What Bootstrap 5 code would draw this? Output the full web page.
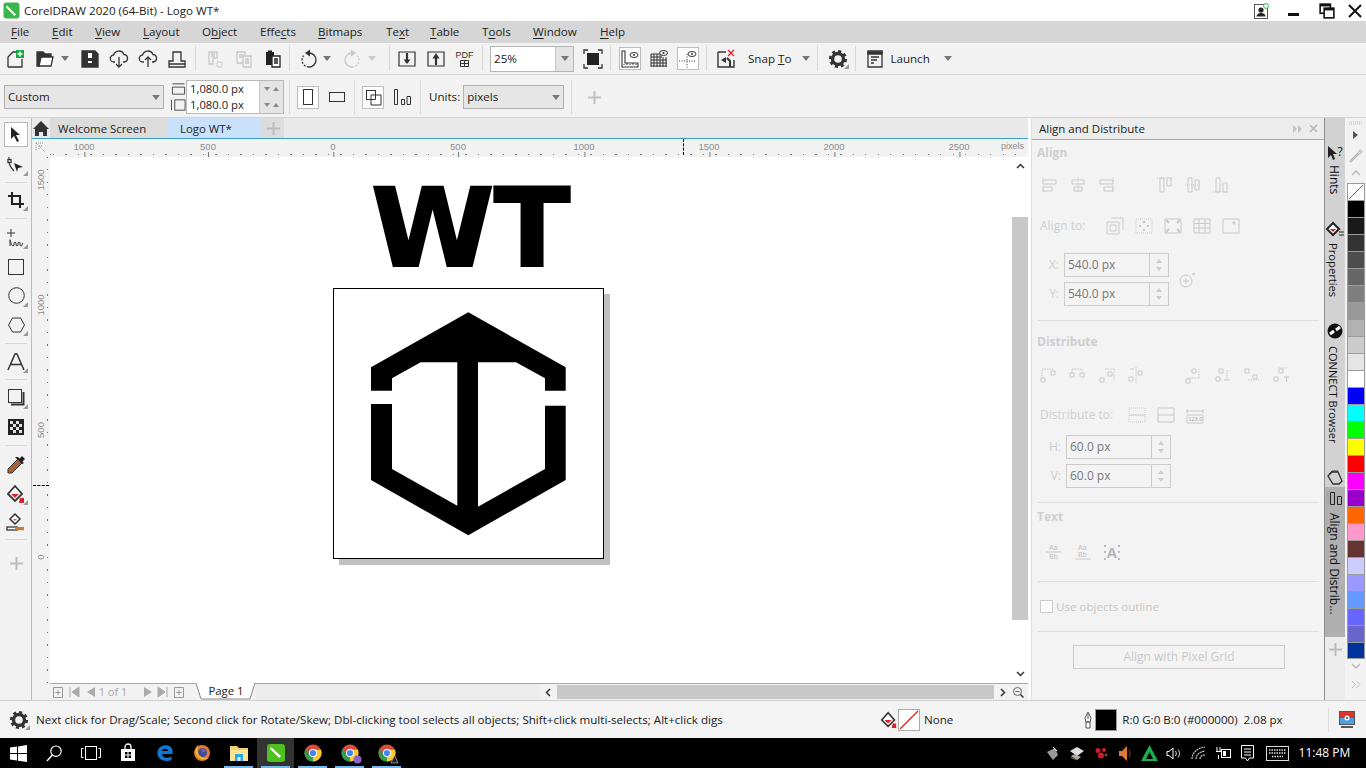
<!doctype html>
<html lang="en">
<head>
<meta charset="utf-8">
<title>CorelDRAW 2020 (64-Bit) - Logo WT*</title>
<link href="https://cdn.jsdelivr.net/npm/bootstrap@5.3.0/dist/css/bootstrap.min.css" rel="stylesheet">
<style>
html,body{margin:0;height:768px;width:1366px;overflow:hidden}
body{font-family:"Open Sans","Liberation Sans",sans-serif;font-size:11.6px;color:#222;background:#f2f2f2;line-height:1.2}
svg{display:block;overflow:visible}
.ic{width:20px;height:20px;fill:none;stroke:#333;stroke-width:1.3}
.ic.lt{stroke:#c8c8c8}
.titlebar{height:21px;background:#fff}
.menubar{height:22px;background:#d6d6d6;display:grid;grid-template-columns:11px 41px 43px 48px 59px 58px 58px 68px 44px 52px 51px 67px 60px}
.menubar u{text-underline-offset:2px}
.bar1{height:32px;background:#f2f2f2;border-bottom:1px solid #d4d4d4}
.bar2{height:43px;background:#f2f2f2;border-bottom:1px solid #d4d4d4;padding-top:2px}
.slot{width:29px;height:26px;flex:none;display:flex;align-items:center;justify-content:center}
.slot22{width:22px;height:23px;flex:none;display:flex;align-items:center;justify-content:center}
.slot.on,.slot22.on{background:#fff;border:1px solid #bdbdbd}
.car{width:8px;height:10px;flex:none;display:flex;align-items:center;justify-content:center}
.car::after{content:"";border:4px solid transparent;border-top:5px solid #777;border-bottom:0}
.car.off::after{border-top-color:#ccc}
.vs{width:1px;height:25px;background:#d6d6d6;flex:none}
.vs2{width:1px;height:34px;background:#d9d9d9;flex:none}
.m1{margin-left:1px}.m2{margin-left:2px}.m3{margin-left:3px}.m4{margin-left:4px}.m5{margin-left:5px}.m6{margin-left:6px}.m7{margin-left:7px}.m8{margin-left:8px}.m9{margin-left:9px}.m10{margin-left:10px}.m11{margin-left:11px}.m13{margin-left:13px}.m14{margin-left:14px}.m16{margin-left:16px}.m19{margin-left:19px}
.combo{height:24px;background:#e6e6e6;border:1px solid #b0b0b0;display:flex;align-items:center;padding-left:3px;flex:none;font-size:11.6px}
.combo .car{margin-left:auto;margin-right:3px}
.zoombox{width:84px;height:26px;border:1px solid #b5b5b5;background:#fff;display:flex;align-items:center;padding-left:3px;flex:none;font-size:11.6px}
.zoombox b{font-weight:400;margin-left:auto;width:18px;height:24px;background:#e4e4e4;border-left:1px solid #c4c4c4;display:flex;align-items:center;justify-content:center}
.spinbox{width:98px;flex:none;border:1px solid #b8b8b8;font-size:11.3px}
.spinrow{height:16px;display:flex}
.spinrow span{flex:1;background:#fff;padding-left:3px;line-height:15px}
.spinrow i{width:24px;background:#e4e4e4;border-left:1px solid #c4c4c4;display:flex;align-items:center;justify-content:space-evenly}
.tri-d,.tri-u{border:3px solid transparent;width:0;height:0}
.tri-d{border-top:4px solid #888;border-bottom:0}
.tri-u{border-bottom:4px solid #888;border-top:0}
.mainrow{height:582px}
.toolbox{width:32px;background:#f2f2f2;border-right:1px solid #bcbcbc;flex:none;padding-left:1px}
.tool{height:29px;display:flex;align-items:center;justify-content:center;position:relative}
.tool.on{width:24px;height:25px;margin:4px 0 3px 3px;background:#fff;border:1px solid #b8b8b8}
.tool.more::after,.slot.more::after{content:"";position:absolute;right:3px;bottom:3px;border-style:solid;border-width:0 0 5px 5px;border-color:transparent transparent #999 transparent}
.slot.more{position:relative}
.tsep{height:1px;background:#d6d6d6;margin:0 4px}
.sp6{padding:3px 0 2px}.sp7{padding:3px 0 3px}.sp8{padding:4px 0 3px}.sp9{padding:4px 0 4px}.sp12{padding:2px 0 9px}
.work{width:996px;flex:none}
.tabstrip{height:21px;background:#e9e9e9;border-bottom:1px solid #3a9ecb}
.dtab{height:20px;display:flex;align-items:center;font-size:11.4px;flex:none;padding-top:1px}
.dhome{width:18px;margin-left:0;justify-content:center}
.dwelcome{width:118px;background:#dcdcdc;padding-left:8px}
.dlogo{width:94px;background:#c9e1fb;padding-left:12px}
.dplus{width:22px;background:#dcdcdc;justify-content:center}
.hruler{height:18px;background:#f2f2f2;position:relative;overflow:hidden}
.hruler::after{content:"";position:absolute;left:18px;right:0;bottom:2px;height:1px;background:repeating-linear-gradient(90deg,#777 0 1px,transparent 1px 12.5px);background-position:3px 0}
.rl{position:absolute;font-size:9.5px;color:#8c8c8c;transform:translateX(-50%);top:2px;font-family:"Liberation Sans",sans-serif}
.rl::after{content:"";position:absolute;left:50%;top:11px;height:5px;width:1px;background:#777}
.rlx::after{display:none}
.vruler{width:18px;background:#f2f2f2;position:relative;flex:none}
.vruler::after{content:"";position:absolute;top:0;bottom:0;right:2px;width:1px;background:repeating-linear-gradient(180deg,#777 0 1px,transparent 1px 12.5px)}
.rv{position:absolute;left:9px;font-size:9.5px;color:#8c8c8c;writing-mode:vertical-rl;transform:translate(-50%,-50%) rotate(180deg);font-family:"Liberation Sans",sans-serif}
.vmark{position:absolute;left:1px;top:328px;width:16px;border-top:1px dashed #000}
.hmark{position:absolute;left:651px;top:0;height:16px;border-left:1px dashed #000}
.canvasrow{height:526px}
.canvasarea{position:relative;background:#fff;width:962px;flex:none;overflow:hidden}
.pageshadow{position:absolute;left:289px;top:137px;width:271px;height:271px;background:#c0c0c0}
.pagebox{position:absolute;left:283px;top:131px;width:271px;height:271px;background:#fff;border:1px solid #000}
.pagebox svg{position:absolute;left:-1px;top:-1px}
.wordmark{position:absolute;left:320px;top:18px;width:200px;text-align:center;font-family:"DejaVu Sans",sans-serif;font-weight:700;font-size:108px;line-height:1;color:#000;-webkit-text-stroke:1.8px #000;letter-spacing:-1px;white-space:nowrap;transform:scaleX(1.04)}
.vscroll{width:16px;background:#fff;flex:none;display:flex;flex-direction:column;align-items:center}
.vscroll .th{width:16px;height:403px;background:#c8c8c8;margin:42px 0 45px}
.vscroll .ar{height:18px;display:flex;align-items:center}
.pagenav{height:17px;background:#f2f2f2;border-top:1px solid #a8a8a8;margin-left:18px;color:#a8a8a8;position:relative}
.pn{display:flex;align-items:center;justify-content:center;flex:none;height:16px;white-space:nowrap}
.pagetab{position:relative;width:60px;height:16px;flex:none;margin-left:9px;color:#222;font-size:11.4px;text-align:center}
.pagetab svg{position:absolute;left:0;top:-1px}
.pagetab span{position:relative}
.navfill{width:284px;flex:none;background:#ececec;height:16px}
.hthumb{width:437px;height:14px;background:#c8c8c8;flex:none}
.gapstrip{width:4px;flex:none;background:#fff;border-right:1px solid #ddd}
.docker{width:292px;flex:none;background:#f3f3f3;color:#c6c6c6}
.dktitle{height:22px;background:#ececec;border-bottom:1px solid #a9a9a9;color:#222;font-size:11.5px;padding:0 6px 0 7px}
.dkhead{height:20px;margin-left:5px;font-weight:700;color:#cfcfcf;font-size:12px;display:flex;align-items:center}
.dkrow{height:20px;display:flex;align-items:center}
.dk{width:18px;height:18px;fill:none;stroke:#c9c9c9;stroke-width:1}
.dk.dkA{stroke:#aaa}
.dk text{font-family:"Liberation Sans",sans-serif;font-size:7px;fill:#c0c0c0;stroke:none}
.dk text.big{font-size:15px;font-weight:700;fill:#b5b5b5}
.dk text.num{font-size:5.5px;fill:#aaa}
.ds{width:29px;display:flex;justify-content:center;flex:none}
.ds28{width:28px;display:flex;justify-content:center;flex:none}
.dklabel{margin-left:8px;font-size:12px;color:#cfcfcf;width:60px;flex:none}
.dkfield{height:24px;display:flex;align-items:center;font-size:12px}
.dkfield label{width:32px;text-align:right;padding-right:5px;color:#cfcfcf;flex:none}
.dkfield.two label{width:34px}
.dkinput{width:105px;height:24px;border:1px solid #ccc;display:flex;align-items:center;padding-left:3px;color:#777;flex:none}
.dkinput i{margin-left:auto;width:19px;height:22px;border-left:1px solid #ccc;display:flex;flex-direction:column;align-items:center;justify-content:space-evenly}
.dkinput .tri-d{border-top-color:#ccc}.dkinput .tri-u{border-bottom-color:#ccc}
.dkline{height:1px;background:#dedede;margin:0 5px 0 6px}
.t3{margin-top:3px}.t4{margin-top:4px}.t5{margin-top:5px}.t10{margin-top:10px}.t11{margin-top:11px}.t12{margin-top:12px}.t13{margin-top:13px}.t14{margin-top:14px}.t15{margin-top:15px}.t17{margin-top:17px}.t19{margin-top:19px}.t20{margin-top:20px}.t21{margin-top:21px}
.chk{width:13px;height:13px;border:1px solid #ccc;background:#fbfbfb;margin:0 3px 0 8px;flex:none}
.dkbtn{width:212px;height:24px;margin-left:41px;border:1px solid #ccc;display:flex;align-items:center;justify-content:center;font-size:12px;color:#c9c9c9}
.vtabs{width:21px;flex:none;background:#d2d2d2;border-left:1px solid #8c8c8c;color:#111;position:relative}
.vt{writing-mode:vertical-rl;font-size:12px;white-space:nowrap;margin-left:2px}
.vi{height:18px;display:flex;align-items:center;justify-content:center}
.vihint{font-size:12px;line-height:1}
.vtsel{height:150px;background:#b0b0b0;padding-top:2px}
.vtrest{height:63px;background:#ececec;display:flex;justify-content:center;padding-top:6px}
.palette{width:21px;flex:none;background:#f2f2f2;display:flex;flex-direction:column;align-items:center}
.sw{width:18px;height:17px;flex:none;border:1px solid #9b9b9b;border-bottom-width:0;position:relative}
.sw:last-of-type{border-bottom-width:1px}
.c0{background:#000}.c1{background:#191919}.c2{background:#333}.c3{background:#4d4d4d}.c4{background:#666}.c5{background:#7f7f7f}.c6{background:#999}.c7{background:#b2b2b2}.c8{background:#ccc}.c9{background:#e5e5e5}.c10{background:#fff}.c11{background:#00f}.c12{background:#0ff}.c13{background:#0f0}.c14{background:#ff0}.c15{background:#f00}.c16{background:#f0f}.c17{background:#90c}.c18{background:#f60}.c19{background:#f9c}.c20{background:#633}.c21{background:#ccf}.c22{background:#99f}.c23{background:#69f}.c24{background:#66f}.c25{background:#66c}.c26{background:#039}
.statusbar{height:38px;background:#f3f3f3;border-top:1px solid #d0d0d0;position:relative}
.taskbar{height:30px;background:#000;color:#fff}
.tk{width:37px;height:30px;flex:none;display:flex;align-items:center;justify-content:center;position:relative}
.tk36{width:36px}
.tk.act{background:#333}
.tk.run::after{content:"";position:absolute;left:4px;right:4px;bottom:0;height:2px;background:#76b9ed}
.tr{width:24.4px;display:flex;justify-content:center;flex:none}
.pdf-t{font-size:9px;color:#333;font-family:"Liberation Sans",sans-serif}
.prop-custom{width:160px}
.unitsbox{width:101px}
#r1{left:84px}#r2{left:208px}#r3{left:333px}#r4{left:458px}#r5{left:584px}#r6{left:709px}#r7{left:834px}#r8{left:959px}#r9{left:969px;transform:none;font-size:9px}
#r1,#r2,#r3,#r4,#r5,#r6,#r7,#r8{margin-left:-32px}
.corner-ic{left:3px;top:3px}
#v1{top:23px}#v2{top:148px}#v3{top:273px}#v4{top:400px}
.nv1{width:16px}.nv2{width:15px}.nv3{width:18px}.nv4{width:28px;font-size:11px}.nv5{width:14px;margin-left:14px}.nv6{width:16px}.nv7{width:16px}
.dk-x{margin-left:31px}.dk-y{margin-left:29px}
.dkl2{width:82px}
.dkchk{height:21px}
.vtop{padding-top:25px;height:43px}
.vt1{height:28px;margin-top:4px}
.vi2{margin-top:28px}.vt2{height:53px;margin-top:4px;font-size:11.2px}
.vi3{margin-top:26px}.vt3{height:97px;margin-top:6px;font-size:11.1px}
.vi4{margin-top:26px}
.vt4{height:98px;margin-top:6px}
.p1{margin-top:3px}.p2{margin-top:6px}.p3{margin-top:10px}.p4{margin-top:8px}.p5{margin-top:7px}.p6{margin-top:4px}.p7{margin-top:11px}
.st-gear{margin-left:4px}
.st-hint{width:0;white-space:nowrap}
.st-fill{margin-left:844px}
.st-pen{margin-left:130px}
.st-black{width:22px;height:22px;background:#000;border:1px solid #999}
.st-sep{width:1px;height:24px;background:#ddd;margin-left:auto}
.st-mon{margin-left:10px;margin-right:11px}
.tb-ov{right:6px;bottom:4px}
.tray-l{margin-left:635px}
.tray-time{font-size:12px;color:#fff}
</style>
</head>
<body>
<svg width="0" height="0" class="position-absolute">
 <defs>
  <symbol id="chrome" viewBox="0 0 18 18"><circle cx="9" cy="9" r="8.5" fill="#dd4b3e"/><path d="M9 9 1.600 13.200A8.500 8.500 0 0 0 9 17.500Z" fill="#2e9e4f"/><path d="M9 9 9 17.500A8.500 8.500 0 0 0 16.900 5.800L9 5.800Z" fill="#fcc934"/><path d="M1.600 13.200A8.500 8.500 0 0 1 1.900 4.400L5.500 10.800Z" fill="#2e9e4f"/><circle cx="9" cy="9" r="4" fill="#fff"/><circle cx="9" cy="9" r="3.100" fill="#4285f4"/></symbol>
  <symbol id="fillic" viewBox="0 0 20 20"><path d="M9 2 2 10l7 7 7-7z" fill="#fff" stroke="#333" stroke-width="1.800"/><path d="M5 10h8l-4 4z" fill="#d9232a"/><path d="M14 14h4v5h-5z" fill="#d9232a"/></symbol>
 </defs>
</svg>

<header class="titlebar d-flex align-items-center">
 <svg class="m3" width="17" height="17" viewBox="0 0 17 17"><rect x="0.5" y="0.5" width="16" height="16" rx="3" fill="#3cb649"/><path d="M4 3.500 13 12.500 11.500 14 2.800 5.200z" fill="#fff"/></svg>
 <span class="m4">CorelDRAW 2020 (64-Bit) - Logo WT*</span>
 <div class="ms-auto d-flex align-items-center">
  <svg width="15" height="16" viewBox="0 0 15 16"><rect x="0.5" y="1.500" width="13" height="14" fill="#fff" stroke="#555"/><circle cx="7" cy="7" r="2.600" fill="#222"/><path d="M2.500 13.500c.5-3 2.500-3.500 4.500-3.500s4 .5 4.500 3.500z" fill="#222"/><circle cx="12" cy="3" r="2.400" fill="#fff" stroke="#3cb649"/></svg>
  <svg class="m19" width="12" height="12" viewBox="0 0 12 12"><rect x="0" y="8" width="11" height="3" fill="#111"/></svg>
  <svg class="m19" width="16" height="16" viewBox="0 0 14 14"><rect x="1" y="1" width="9" height="8" fill="#fff" stroke="#111" stroke-width="1.400"/><path d="M1 1h9v2H1z" fill="#111"/><rect x="4.500" y="4.500" width="8.500" height="8.500" fill="#fff" stroke="#111" stroke-width="1.400"/><path d="M4.500 4.500H13v2H4.500z" fill="#111"/></svg>
  <svg class="m13" width="14" height="14" viewBox="0 0 14 14"><path d="M1 1 13 13M13 1 1 13" stroke="#111" stroke-width="2"/></svg>
  <span class="m4"></span>
 </div>
</header>

<nav class="menubar align-items-center">
 <span></span><span><u>F</u>ile</span><span><u>E</u>dit</span><span><u>V</u>iew</span><span><u>L</u>ayout</span><span>O<u>b</u>ject</span><span>Effe<u>c</u>ts</span><span><u>B</u>itmaps</span><span>Te<u>x</u>t</span><span><u>T</u>able</span><span>T<u>o</u>ols</span><span><u>W</u>indow</span><span><u>H</u>elp</span>
</nav>

<div class="bar1 d-flex align-items-center">
 <div class="slot m1"><svg class="ic" viewBox="0 0 20 20"><path d="M2 18V8l5-5h3M16 10v8H2"/><rect x="10" y="1" width="8" height="8" fill="#17a84a" stroke="none"/><path d="M14 2.500v5M11.500 5h5" stroke="#fff" stroke-width="1.500"/></svg></div>
 <div class="slot"><svg class="ic" viewBox="0 0 20 20"><path d="M2 17V3h6l2 2h6v3H6L4 17Z" fill="#333"/><path d="M6 8h12l-2 9H4Z" fill="#fff"/></svg></div>
 <div class="car m2"></div>
 <div class="slot m6"><svg class="ic" viewBox="0 0 20 20"><path d="M2 2h13l3 3v13H2z" fill="#333"/><rect x="8" y="4" width="4" height="5" fill="#fff" stroke="none"/><rect x="8" y="12" width="4" height="2" fill="#fff" stroke="none"/></svg></div>
 <div class="slot"><svg class="ic" viewBox="0 0 20 20"><path d="M6 13H5a3.500 3.500 0 0 1-.4-7A5.500 5.500 0 0 1 15 5.500a3.800 3.800 0 0 1 .5 7.500H14"/><path d="M10 8v10M7 15l3 3 3-3"/></svg></div>
 <div class="slot"><svg class="ic" viewBox="0 0 20 20"><path d="M6 13H5a3.500 3.500 0 0 1-.4-7A5.500 5.500 0 0 1 15 5.500a3.800 3.800 0 0 1 .5 7.500H14"/><path d="M10 18V8M7 11l3-3 3 3"/></svg></div>
 <div class="slot"><svg class="ic" viewBox="0 0 20 20"><path d="M2 18v-6h4V3h8v9h4v6zM2 15h16"/></svg></div>
 <div class="vs m4"></div>
 <div class="slot m4"><svg class="ic lt" viewBox="0 0 20 20"><path d="M4 3h8v6H8v6H4zM6 5h4M6 7h4"/><path d="M12 13h5v5h-5z" stroke-dasharray="1.500 1"/></svg></div>
 <div class="slot"><svg class="ic lt" viewBox="0 0 20 20"><path d="M3 3h8v11H3zM5 6h4M5 8h4"/><path d="M9 7h8v11H9zM11 10h4M11 12h4M11 14h4" fill="#f2f2f2"/></svg></div>
 <div class="slot"><svg class="ic" viewBox="0 0 20 20"><rect x="3" y="3" width="8" height="13" fill="#222" stroke="none"/><rect x="5" y="1.500" width="4" height="3" fill="#222" stroke="none"/><path d="M9 7h8v11H9zM11 10h4M11 12h4M11 14h4" fill="#fff" stroke="#222"/></svg></div>
 <div class="vs m2"></div>
 <div class="slot m4"><svg class="ic" viewBox="0 0 20 20"><path d="M10 4a7 7 0 0 1 0 14"/><path d="M10 18a7 7 0 0 1-5.500-11.300" stroke-dasharray="2 1.500"/><path d="M11 .5v7L6 4z" fill="#333" stroke="none"/></svg></div>
 <div class="car"></div>
 <div class="slot m6"><svg class="ic lt" viewBox="0 0 20 20"><path d="M10 4a7 7 0 0 0 0 14"/><path d="M10 18a7 7 0 0 0 5.500-11.300" stroke-dasharray="2 1.500"/><path d="M9 .5v7L14 4z" fill="#c8c8c8" stroke="none"/></svg></div>
 <div class="car off m2"></div>
 <div class="vs m13"></div>
 <div class="slot m2"><svg class="ic" viewBox="0 0 20 20"><path d="M2 3h16v14H2z" stroke-width="1.200"/><path d="M10 4v10" stroke-width="2.200"/><path d="M6.500 10.500 10 15l3.500-4.500z" fill="#333" stroke="none"/></svg></div>
 <div class="slot"><svg class="ic" viewBox="0 0 20 20"><path d="M2 3h16v14H2z" stroke-width="1.200"/><path d="M10 16V7" stroke-width="2.200"/><path d="M6.500 9.500 10 4l3.500 5.500z" fill="#333" stroke="none"/></svg></div>
 <div class="slot flex-column lh-1"><span class="pdf-t">PDF</span><svg width="9" height="7" viewBox="0 0 9 7"><path d="M.5.500h8v6h-8zM4.500.500v6M.5 3.500h8" fill="none" stroke="#333"/></svg></div>
 <div class="vs m3"></div>
 <div class="zoombox m7">25%<b><span class="car"></span></b></div>
 <div class="slot m4"><svg class="ic" viewBox="0 0 20 20"><rect x="4" y="4" width="12" height="12" fill="#222" stroke="none"/><path d="M1 5V1h4M15 1h4v4M19 15v4h-4M5 19H1v-4"/></svg></div>
 <div class="vs m3"></div>
 <div class="slot22 on m8"><svg class="ic" viewBox="0 0 20 20"><path d="M2 2h3v12h13v4H2z" fill="#fff" stroke-width="1.100"/><path d="M4 16v-1M7 16v-2M10 16v-1M13 16v-2M16 16v-1" stroke-width="1"/><ellipse cx="14" cy="6" rx="4" ry="2.500" stroke-width="1"/><circle cx="14" cy="6" r="1" fill="#333" stroke="none"/></svg></div>
 <div class="slot m3"><svg class="ic" viewBox="0 0 20 20"><path d="M2 8h11M2 11h16M2 14h16M2 17h16M2 5h8M2 5v13M5 5v13M8 5v13M11 5v13M14 8v10M17 8v10" stroke-width="1"/><ellipse cx="14.500" cy="4" rx="4" ry="2.500" stroke-width="1"/><circle cx="14.500" cy="4" r="1" fill="#333" stroke="none"/></svg></div>
 <div class="slot22 on m4"><svg class="ic" viewBox="0 0 20 20"><path d="M9 5v14M1 12h16" stroke-dasharray="1 1.500" stroke-width="1"/><ellipse cx="14" cy="5" rx="4" ry="2.500" stroke-width="1"/><circle cx="14" cy="5" r="1" fill="#333" stroke="none"/></svg></div>
 <div class="vs m7"></div>
 <div class="slot m4"><svg class="ic" viewBox="0 0 20 20"><path d="M2 3h8M2 3v15h16v-7" stroke-width="1.400"/><path d="M5 11l5-3v6z" fill="#333" stroke="none"/><path d="M11 9l3 3v6" stroke-width="2"/><path d="M12 1l6 6M18 1l-6 6" stroke="#d9232a" stroke-width="1.400"/></svg></div>
 <span class="m8">Snap <u>T</u>o</span>
 <div class="car m11"></div>
 <div class="vs m7"></div>
 <div class="slot more m5"><svg class="ic" viewBox="0 0 20 20"><circle cx="10" cy="10" r="5.500" stroke-width="3.400"/><circle cx="10" cy="10" r="7.800" stroke-width="2.600" stroke-dasharray="3.100 3"/></svg></div>
 <div class="vs m3"></div>
 <div class="slot m4"><svg class="ic" viewBox="0 0 20 20"><path d="M3 2h14v16H3z"/><path d="M3 3h14v2H3z" fill="#333"/><path d="M6 8h8M6 11h6M6 14h3"/></svg></div>
 <span class="m1">Launch</span>
 <div class="car m14"></div>
</div>

<div class="bar2 d-flex align-items-center">
 <div class="combo m4 prop-custom">Custom<span class="car"></span></div>
 <div class="d-flex flex-column m7 gap-1">
  <svg width="15" height="12" viewBox="0 0 16 12"><path d="M1.500.5h13M1.500 4h13v7.500h-13z" fill="none" stroke="#444"/></svg>
  <svg width="15" height="12" viewBox="0 0 16 12"><path d="M.5.500v11M4 .5h11v11H4z" fill="none" stroke="#444"/></svg>
 </div>
 <div class="spinbox">
  <div class="spinrow"><span>1,080.0 px</span><i><b class="tri-d"></b><b class="tri-u"></b></i></div>
  <div class="spinrow"><span>1,080.0 px</span><i><b class="tri-d"></b><b class="tri-u"></b></i></div>
 </div>
 <div class="vs2 m5"></div>
 <div class="slot22 on m7"><svg width="10" height="16" viewBox="0 0 10 16"><rect x=".5" y=".5" width="9" height="15" fill="none" stroke="#333"/></svg></div>
 <div class="slot22 m7"><svg width="16" height="10" viewBox="0 0 16 10"><rect x=".5" y=".5" width="15" height="9" fill="none" stroke="#333"/></svg></div>
 <div class="vs2 m6"></div>
 <div class="slot22 on m7"><svg width="17" height="17" viewBox="0 0 17 17"><path d="M1.500 1.500h9v9h-9z" fill="#fff" stroke="#333"/><path d="M6 6h10v10H6z" fill="#fff" stroke="#333"/><path d="M1.500 1.500h9v9h-9z" fill="none" stroke="#333"/></svg></div>
 <div class="slot22 m7"><svg width="17" height="16" viewBox="0 0 17 16"><path d="M.5.500h3v15h-3zM7.500 10.500h3v5h-3zM13 7.500h3.500v8H13z" fill="none" stroke="#333"/></svg></div>
 <div class="vs2 m7"></div>
 <span class="m8">Units:</span>
 <div class="combo m3 unitsbox">pixels<span class="car"></span></div>
 <div class="vs2 m7"></div>
 <svg class="m16" width="13" height="13" viewBox="0 0 13 13"><path d="M6.500 0v13M0 6.500h13" stroke="#c2c2c2" stroke-width="2"/></svg>
</div>

<main class="mainrow d-flex">
 <aside class="toolbox">
  <div class="tool on"><svg width="14" height="17" viewBox="0 0 14 17"><path d="M2 1v12l3-3 3 6 2-1-3-6h4z" fill="#222"/></svg></div>
  <div class="tool more"><svg class="ic" viewBox="0 0 20 20"><path d="M3 2c-1 5 1 10 5 14" stroke-width="1.100"/><rect x="2" y="4.500" width="3" height="3" fill="#fff"/><path d="M8 8l9 4-5 1-1 4z" fill="#222" stroke="none"/></svg></div>
  <div class="sp6"><div class="tsep"></div></div>
  <div class="tool more"><svg width="16" height="16" viewBox="0 0 20 20"><path d="M5 0v15h15M0 5h15v15" fill="none" stroke="#222" stroke-width="2.600"/></svg></div>
  <div class="sp9"><div class="tsep"></div></div>
  <div class="tool more"><svg class="ic" viewBox="0 0 20 20"><path d="M5 1v8M1 5h8M4 18v-6c0-2 1 6 3 6s0-4 2-4 0 4 2 4 0-4 2-4 0 4 2 4 0-3 2-3" stroke-width="1"/></svg></div>
  <div class="tool"><svg width="16" height="16" viewBox="0 0 16 16"><rect x=".5" y=".5" width="15" height="15" fill="none" stroke="#333"/></svg></div>
  <div class="tool more"><svg width="17" height="17" viewBox="0 0 17 17"><circle cx="8.500" cy="8.500" r="7.800" fill="none" stroke="#333"/></svg></div>
  <div class="tool more"><svg width="17" height="16" viewBox="0 0 17 16"><path d="M4.500 1h8l4 7-4 7h-8l-4-7z" fill="none" stroke="#333"/></svg></div>
  <div class="sp8"><div class="tsep"></div></div>
  <div class="tool more"><svg width="18" height="18" viewBox="0 0 18 18"><path d="M1 17 8 1h2l7 16M4 11.500h10" fill="none" stroke="#333" stroke-width="1.500"/></svg></div>
  <div class="sp7"><div class="tsep"></div></div>
  <div class="tool more"><svg width="17" height="17" viewBox="0 0 17 17"><rect x=".5" y=".5" width="13" height="13" fill="none" stroke="#333"/><path d="M15.500 3v12.500H3" fill="none" stroke="#333" stroke-width="2"/></svg></div>
  <div class="tool"><svg width="16" height="16" viewBox="0 0 16 16"><rect width="16" height="16" fill="#222"/><path d="M2 2h3v3H2zM8 2h3v3H8zM5 5h3v3H5zM11 5h3v3h-3zM2 8h3v3H2zM8 8h3v3H8zM5 11h3v3H5zM11 11h3v3h-3z" fill="#e0e0e0"/></svg></div>
  <div class="sp9"><div class="tsep"></div></div>
  <div class="tool"><svg class="ic" viewBox="0 0 20 20"><path d="M12 4 16 8 6 18 2 18 2 14z" fill="#a4643a" stroke-width="1"/><path d="M12 2l1.500 1.500L16 1l3 3-2.500 2.500L18 8l-2 1-7-7z" fill="#222" stroke="none"/></svg></div>
  <div class="tool more"><svg width="20" height="20"><use href="#fillic"/></svg></div>
  <div class="tool"><svg class="ic" viewBox="0 0 20 20"><path d="M9 1 4 6l5 5 5-5z" fill="#fff" stroke-width="1.500"/><path d="M7 6h4l-2 2z" fill="#d9632a" stroke="none"/><rect x="1" y="14" width="10" height="3" fill="#fff"/><rect x="9" y="14" width="9" height="3.200" fill="#c87a33" stroke="none"/></svg></div>
  <div class="sp12"><div class="tsep"></div></div>
  <div class="tool"><svg width="13" height="13" viewBox="0 0 13 13"><path d="M6.500 0v13M0 6.500h13" stroke="#bbb" stroke-width="2"/></svg></div>
 </aside>

 <section class="work">
  <div class="tabstrip d-flex">
   <div class="dtab dhome"><svg width="16" height="15" viewBox="0 0 16 15"><path d="M8 0 0 8h2v7h4v-4h4v4h4V8h2z" fill="#333"/></svg></div>
   <div class="dtab dwelcome">Welcome Screen</div>
   <div class="dtab dlogo">Logo WT*</div>
   <div class="dtab dplus"><svg width="13" height="13" viewBox="0 0 13 13"><path d="M6.500 0v13M0 6.500h13" stroke="#bcbcbc" stroke-width="2"/></svg></div>
  </div>
  <div class="hruler">
   <svg class="position-absolute corner-ic" width="12" height="12" viewBox="0 0 12 12"><path d="M1 1h8M1 1v8M1 1l9 9M4 4h4M4 4v4" stroke="#999" stroke-dasharray="1 1" fill="none"/></svg>
   <span class="rl" id="r1">1000</span><span class="rl" id="r2">500</span><span class="rl" id="r3">0</span><span class="rl" id="r4">500</span><span class="rl" id="r5">1000</span><span class="rl" id="r6">1500</span><span class="rl" id="r7">2000</span><span class="rl" id="r8">2500</span><span class="rl rlx" id="r9">pixels</span>
   <div class="hmark"></div>
  </div>
  <div class="canvasrow d-flex">
   <div class="vruler">
    <span class="rv" id="v1">1500</span><span class="rv" id="v2">1000</span><span class="rv" id="v3">500</span><span class="rv" id="v4">0</span>
    <div class="vmark"></div>
   </div>
   <div class="canvasarea">
    <div class="wordmark">WT</div>
    <div class="pageshadow"></div>
    <div class="pagebox">
     <svg width="271" height="271" viewBox="333 288 271 271"><path d="M468.300 312.300 565.700 367.300V390.700H545V378.300L516 362.300H478V506.700L545 469V405.700H565.700V480L468.300 535.300 371 480V404H392V469L457.300 505.700V362.300H420.700L392 378.300V390.700H371V367.300Z" fill="#000"/></svg>
    </div>
   </div>
   <div class="vscroll">
    <div class="ar"><svg width="9" height="6" viewBox="0 0 9 6"><path d="M1 5 4.500 1.500 8 5" fill="none" stroke="#333" stroke-width="1.500"/></svg></div>
    <div class="th"></div>
    <div class="ar"><svg width="9" height="6" viewBox="0 0 9 6"><path d="M1 1 4.500 4.500 8 1" fill="none" stroke="#333" stroke-width="1.500"/></svg></div>
   </div>
  </div>
  <div class="pagenav d-flex align-items-center">
   <div class="pn nv1"><svg width="10" height="11" viewBox="0 0 10 11"><path d="M.5.500h9v10h-9zM5 3v5M2.500 5.500h5" fill="none" stroke="#999"/></svg></div>
   <div class="pn nv2"><svg width="10" height="10" viewBox="0 0 10 10"><path d="M1 0v10M10 0 3 5l7 5z" fill="#aaa" stroke="#aaa"/></svg></div>
   <div class="pn nv3"><svg width="9" height="10" viewBox="0 0 9 10"><path d="M9 0 1 5l8 5z" fill="#aaa"/></svg></div>
   <div class="pn nv4">1 of 1</div>
   <div class="pn nv5"><svg width="9" height="10" viewBox="0 0 9 10"><path d="M0 0l8 5-8 5z" fill="#aaa"/></svg></div>
   <div class="pn nv6"><svg width="10" height="10" viewBox="0 0 10 10"><path d="M9 0v10M0 0l7 5-7 5z" fill="#aaa" stroke="#aaa"/></svg></div>
   <div class="pn nv7"><svg width="10" height="11" viewBox="0 0 10 11"><path d="M.5.500h9v10h-9zM5 3v5M2.500 5.500h5" fill="none" stroke="#999"/></svg></div>
   <div class="pagetab"><svg width="60" height="17" viewBox="0 0 60 17"><path d="M0 0 5 16H54L59 0" fill="#fff" stroke="#888"/></svg><span>Page 1</span></div>
   <div class="navfill"></div>
   <svg class="m5" width="6" height="9" viewBox="0 0 6 9"><path d="M5 1 1.500 4.500 5 8" fill="none" stroke="#333" stroke-width="1.500"/></svg>
   <div class="hthumb m6"></div>
   <svg class="m6" width="6" height="9" viewBox="0 0 6 9"><path d="M1 1 4.500 4.500 1 8" fill="none" stroke="#333" stroke-width="1.500"/></svg>
   <svg class="m7" width="11" height="11" viewBox="0 0 11 11"><circle cx="4.500" cy="4.500" r="4" fill="none" stroke="#666"/><path d="M7.500 7.500 10.500 10.500" stroke="#333" stroke-width="1.500"/><path d="M2.500 4.500h4" stroke="#666"/></svg>
  </div>
 </section>

 <div class="gapstrip"></div>

 <section class="docker">
  <div class="dktitle d-flex align-items-center">Align and Distribute
   <svg class="ms-auto" width="9" height="8" viewBox="0 0 9 8"><path d="M0 0l4 4-4 4zM5 0l4 4-4 4z" fill="#c4c4c4"/></svg>
   <svg class="m7" width="9" height="9" viewBox="0 0 9 9"><path d="M1 1l7 7M8 1 1 8" stroke="#b5b5b5" stroke-width="1.500"/></svg>
  </div>
  <div class="dkhead t3">Align</div>
  <div class="dkrow t12 m4">
   <div class="ds28"><svg class="dk" viewBox="0 0 18 18"><path d="M2 1v16" stroke-dasharray="1 1"/><path d="M2 4h13v4H2zM2 11h9v4H2z"/></svg></div>
   <div class="ds28"><svg class="dk" viewBox="0 0 18 18"><path d="M9 1v16" stroke-dasharray="1 1"/><path d="M3 4h12v4H3zM5 11h8v4H5z"/></svg></div>
   <div class="ds28"><svg class="dk" viewBox="0 0 18 18"><path d="M16 1v16" stroke-dasharray="1 1"/><path d="M3 4h13v4H3zM7 11h9v4H7z"/></svg></div>
   <div class="ds28 dk-x"><svg class="dk" viewBox="0 0 18 18"><path d="M1 2h16" stroke-dasharray="1 1"/><path d="M4 2h4v14H4zM11 2h4v8h-4z"/></svg></div>
   <div class="ds28"><svg class="dk" viewBox="0 0 18 18"><path d="M1 9h16" stroke-dasharray="1 1"/><path d="M4 2h4v14H4zM11 4h4v10h-4z"/></svg></div>
   <div class="ds28"><svg class="dk" viewBox="0 0 18 18"><path d="M1 16h16" stroke-dasharray="1 1"/><path d="M4 2h4v14H4zM11 7h4v9h-4z"/></svg></div>
  </div>
  <div class="dkrow t21"><span class="dklabel">Align to:</span>
   <div class="ds"><svg class="dk" viewBox="0 0 18 18"><path d="M1 5h12v12H1zM5 1h12v12M4 8h6v6H4z"/></svg></div>
   <div class="ds"><svg class="dk" viewBox="0 0 18 18"><path d="M1 2h16v14H1z" stroke-dasharray="1 1"/><path d="M9 4v2M9 12v2M4 9h2M12 9h2" stroke-width="2"/></svg></div>
   <div class="ds"><svg class="dk" viewBox="0 0 18 18"><path d="M1 2h16v14H1z"/><path d="M2 3l3 3M16 3l-3 3M2 15l3-3M16 15l-3-3" stroke-width="2"/></svg></div>
   <div class="ds"><svg class="dk" viewBox="0 0 18 18"><path d="M1 2h16v14H1zM1 6.500h16M1 11h16M6 2v14M12 2v14"/></svg></div>
   <div class="ds"><svg class="dk" viewBox="0 0 18 18"><path d="M1 2h16v14H1zM12 4v4M10 6h4"/></svg></div>
  </div>
  <div class="d-flex t17 position-relative">
   <div>
    <div class="dkfield"><label>X:</label><div class="dkinput">540.0 px<i><b class="tri-u"></b><b class="tri-d"></b></i></div></div>
    <div class="dkfield t5"><label>Y:</label><div class="dkinput">540.0 px<i><b class="tri-u"></b><b class="tri-d"></b></i></div></div>
   </div>
   <svg class="dk align-self-center m9" viewBox="0 0 18 18"><circle cx="8" cy="10" r="6"/><path d="M8 7v6M5 10h6M15 2l2 1-2 1z"/></svg>
  </div>
  <div class="dkline t14"></div>
  <div class="dkhead t11">Distribute</div>
  <div class="dkrow t13 m2">
   <div class="ds"><svg class="dk" viewBox="0 0 18 18"><path d="M2 3h11M2 4v8" stroke-dasharray="1.500 1"/><path d="M1 12h4v4H1zM11 5h4v4h-4z"/></svg></div>
   <div class="ds"><svg class="dk" viewBox="0 0 18 18"><path d="M3 3h10M13 3v3" stroke-dasharray="1.500 1"/><path d="M1 7h4v4H1zM11 7h4v4h-4zM3 3v4"/></svg></div>
   <div class="ds"><svg class="dk" viewBox="0 0 18 18"><path d="M7 3h9M16 3v11" stroke-dasharray="1.500 1"/><path d="M2 12h4v4H2zM10 6h4v4h-4z"/></svg></div>
   <div class="ds"><svg class="dk" viewBox="0 0 18 18"><path d="M9 1v16" stroke-dasharray="1.500 1"/><path d="M2 11h4v4H2zM11 5h4v4h-4zM3 3h4"/></svg></div>
   <div class="ds dk-y"><svg class="dk" viewBox="0 0 18 18"><path d="M2 12h12M14 3v9" stroke-dasharray="1.500 1"/><path d="M7 3h4v4H7zM1 13h4v4H1z"/></svg></div>
   <div class="ds"><svg class="dk" viewBox="0 0 18 18"><path d="M13 4v10" stroke-dasharray="1.500 1"/><path d="M5 3h4v4H5zM2 11h4v4H2zM10 14h6"/></svg></div>
   <div class="ds"><svg class="dk" viewBox="0 0 18 18"><path d="M5 14h11" stroke-dasharray="1.500 1"/><path d="M2 3h4v4H2zM10 9h4v4h-4z"/></svg></div>
   <div class="ds"><svg class="dk" viewBox="0 0 18 18"><path d="M6 2h10" stroke-dasharray="1.500 1"/><path d="M7 3h4v4H7zM2 11h4v4H2zM12 11h5M14.500 11v5"/></svg></div>
  </div>
  <div class="dkrow t20"><span class="dklabel dkl2">Distribute to:</span>
   <div class="ds"><svg class="dk" viewBox="0 0 18 18"><path d="M1 2h16v14H1z" stroke-dasharray="1 1"/><path d="M1 9h16"/></svg></div>
   <div class="ds"><svg class="dk" viewBox="0 0 18 18"><path d="M1 2h16v14H1zM1 9h16"/></svg></div>
   <div class="ds"><svg class="dk" viewBox="0 0 18 18"><path d="M1 5h16M1 3v4M17 3v4M1 9h16v8H1z"/><text class="num" x="2.500" y="15">123.0</text></svg></div>
  </div>
  <div class="dkfield two t10"><label>H:</label><div class="dkinput">60.0 px<i><b class="tri-u"></b><b class="tri-d"></b></i></div></div>
  <div class="dkfield two t5"><label>V:</label><div class="dkinput">60.0 px<i><b class="tri-u"></b><b class="tri-d"></b></i></div></div>
  <div class="dkline t14"></div>
  <div class="dkhead t4">Text</div>
  <div class="dkrow t15 m7">
   <div class="ds"><svg class="dk" viewBox="0 0 18 18"><text x="4" y="7">Aa</text><path d="M1 9h16"/><text x="4" y="16">Bb</text></svg></div>
   <div class="ds"><svg class="dk" viewBox="0 0 18 18"><text x="4" y="7">Aa</text><text x="4" y="14">Bb</text><path d="M1 16h16"/></svg></div>
   <div class="ds"><svg class="dk dkA" viewBox="0 0 18 18"><text class="big" x="3.500" y="15">A</text><path d="M1 3h2M15 3h2M1 9h2M15 9h2M1 16h2M15 16h2" stroke-width="1.400"/></svg></div>
  </div>
  <div class="dkline t19"></div>
  <div class="d-flex align-items-center t14 dkchk"><div class="chk"></div>Use objects outline</div>
  <div class="dkline t14"></div>
  <div class="dkbtn t13">Align with Pixel Grid</div>
 </section>

 <section class="vtabs">
  <div class="vtop">
   <div class="vi vihint"><svg width="10" height="15" viewBox="0 0 10 15"><path d="M1 1v12l3-3 2 5 2-1-2-5h4z" fill="#222"/></svg>?</div>
  </div>
  <div class="vt vt1">Hints</div>
  <div class="vi vi2"><svg width="18" height="16" viewBox="0 0 18 16"><path d="M7 1 1 7l6 6 6-6z" fill="#fff" stroke="#222" stroke-width="2"/><path d="M4 7h6l-3 3z" fill="#c8281e"/><path d="M13 10h5M13 13h5" stroke="#222"/></svg></div>
  <div class="vt vt2">Properties</div>
  <div class="vi vi3"><svg width="16" height="16" viewBox="0 0 16 16"><circle cx="8" cy="8" r="7.500" fill="#111"/><path d="M3 11 7 8M9 7l4-3" stroke="#fff" stroke-width="3"/></svg></div>
  <div class="vt vt3">CONNECT Browser</div>
  <div class="vi vi4"><svg width="16" height="16" viewBox="0 0 16 16"><path d="M1 6 5 2h6l4 9-3 3H6z" fill="none" stroke="#333" stroke-width="1.300"/><path d="M2 4 5 1h6" fill="none" stroke="#333"/></svg></div>
  <div class="vtsel">
   <div class="vi"><svg width="16" height="16" viewBox="0 0 16 16"><path d="M1 1v14" stroke="#3a9ecb" stroke-dasharray="1 1"/><path d="M3.500 2.500h4v12h-4zM10.500 6.500h4v8h-4z" fill="none" stroke="#222"/></svg></div>
   <div class="vt vt4">Align and Distrib...</div>
  </div>
  <div class="vtrest"><svg width="13" height="13" viewBox="0 0 13 13"><path d="M6.500 0v13M0 6.500h13" stroke="#bbb" stroke-width="2"/></svg></div>
 </section>

 <section class="palette">
  <svg class="p1" width="14" height="4" viewBox="0 0 14 4"><path d="M0 1h14M0 3h14" stroke="#bbb" stroke-dasharray="1 1"/></svg>
  <svg class="p2" width="6" height="8" viewBox="0 0 6 8"><path d="M0 0l5 4-5 4z" fill="#555"/></svg>
  <svg class="p3" width="13" height="13" viewBox="0 0 13 13"><path d="M1 12 9 4l2-3 2 2-3 2-8 8z" fill="none" stroke="#bbb" stroke-width="1.200"/></svg>
  <svg class="p4" width="10" height="6" viewBox="0 0 10 6"><path d="M1 5 5 1l4 4" fill="none" stroke="#bbb" stroke-width="1.500"/></svg>
  <div class="sw p5 bg-white"><svg width="16" height="16" viewBox="0 0 16 16"><path d="M1 15 15 1" stroke="#e0394a"/></svg></div>
  <div class="sw c0"></div><div class="sw c1"></div><div class="sw c2"></div><div class="sw c3"></div><div class="sw c4"></div><div class="sw c5"></div><div class="sw c6"></div><div class="sw c7"></div><div class="sw c8"></div><div class="sw c9"></div><div class="sw c10"></div><div class="sw c11"></div><div class="sw c12"></div><div class="sw c13"></div><div class="sw c14"></div><div class="sw c15"></div><div class="sw c16"></div><div class="sw c17"></div><div class="sw c18"></div><div class="sw c19"></div><div class="sw c20"></div><div class="sw c21"></div><div class="sw c22"></div><div class="sw c23"></div><div class="sw c24"></div><div class="sw c25"></div><div class="sw c26"></div>
  <svg class="p6" width="10" height="6" viewBox="0 0 10 6"><path d="M1 1 5 5l4-4" fill="none" stroke="#bbb" stroke-width="1.500"/></svg>
  <svg class="p7" width="10" height="9" viewBox="0 0 10 9"><path d="M1 1l3.500 3.500L1 8M5.500 1 9 4.500 5.500 8" fill="none" stroke="#bbb"/></svg>
 </section>
</main>

<footer class="statusbar d-flex align-items-center">
 <div class="slot more st-gear"><svg class="ic" viewBox="0 0 20 20"><circle cx="10" cy="10" r="5.500" stroke-width="3.400"/><circle cx="10" cy="10" r="7.800" stroke-width="2.600" stroke-dasharray="3.100 3"/></svg></div>
 <span class="m3 st-hint">Next click for Drag/Scale; Second click for Rotate/Skew; Dbl-clicking tool selects all objects; Shift+click multi-selects; Alt+click digs</span>
 <div class="st-fill d-flex align-items-center">
  <svg width="18" height="18"><use href="#fillic"/></svg>
  <svg width="22" height="22" viewBox="0 0 22 22"><rect x=".5" y=".5" width="21" height="21" fill="#fff" stroke="#aaa"/><path d="M2 20 20 2" stroke="#c8281e" stroke-width="1.300"/></svg>
  <span class="m4">None</span>
 </div>
 <div class="st-pen d-flex align-items-center">
  <svg width="10" height="18" viewBox="0 0 10 18"><path d="M5 1 8 7 7 11H3L2 7zM3 11h4v6H3zM5 3v5" fill="#fff" stroke="#555"/></svg>
  <div class="st-black m2"></div>
  <span class="m5">R:0 G:0 B:0 (#000000)&nbsp; 2.08 px</span>
 </div>
 <div class="st-sep"></div>
 <svg class="st-mon" width="16" height="17" viewBox="0 0 16 17"><rect x=".5" y=".5" width="15" height="13" fill="#d9362b" stroke="#555"/><rect x="1" y="7" width="14" height="6" fill="#4aa3df"/><circle cx="8" cy="7" r="2.500" fill="#fff"/><circle cx="8" cy="7" r="1" fill="#444"/><path d="M2 16h12" stroke="#222" stroke-width="1.500"/></svg>
</footer>

<div class="taskbar d-flex align-items-center">
 <div class="tk tk36"><svg width="17" height="17" viewBox="0 0 17 17"><path d="M0 2.500 7 1.500V8H0zM8 1.400 17 0V8H8zM0 9h7v6.500L0 14.500zM8 9h9v8L8 15.700z" fill="#fff"/></svg></div>
 <div class="tk tk36"><svg width="16" height="17" viewBox="0 0 16 17"><circle cx="10" cy="6.200" r="5.200" fill="none" stroke="#fff" stroke-width="1.200"/><path d="M6.300 10 1 16" stroke="#fff" stroke-width="1.400"/></svg></div>
 <div class="tk"><svg width="20" height="14" viewBox="0 0 20 14"><rect x="4.500" y=".5" width="11" height="13" fill="none" stroke="#fff"/><path d="M2.500 2.500H.5v9h2M17.500 2.500h2v9h-2" fill="none" stroke="#fff"/></svg></div>
 <div class="tk"><svg width="14" height="16" viewBox="0 0 14 16"><path d="M0 4h14v12H0z" fill="#fff"/><path d="M4 4V2a3 3 0 0 1 6 0v2" fill="none" stroke="#fff" stroke-width="1.300"/><path d="M4 7h2.500v2.500H4zM7.500 7H10v2.500H7.500zM4 10.500h2.500V13H4zM7.500 10.500H10V13H7.500z" fill="#000"/></svg></div>
 <div class="tk"><svg width="16" height="16" viewBox="0 0 16 16"><path d="M15.500 9H5c.3 4 5.500 5 9.500 2.500V15C8.500 17.500 0 15 .5 7.500 1 1 7-.5 11 .5c3.500 1 5 4 4.500 8.500zM5 6h6.200C11 3 5.500 3 5 6z" fill="#0e78d5"/></svg></div>
 <div class="tk"><svg width="18" height="18" viewBox="0 0 18 18"><circle cx="9" cy="9" r="8" fill="#e8792b"/><circle cx="9.500" cy="8.500" r="4.500" fill="#3a4d9c"/><path d="M5 1c-4 4-3 9 0 12 3 3 8 4 11 0-3 2-7 1-9-1-2-2-3-6-2-11z" fill="#f6b32c"/><path d="M8 5c2-1 4 0 5 2l-4 2z" fill="#7a5bb0"/></svg></div>
 <div class="tk run"><svg width="18" height="16" viewBox="0 0 18 16"><path d="M0 1h7l2 2h9v13H0z" fill="#f5d26c"/><path d="M0 5h18v11H0z" fill="#fbe39a"/><rect x="5" y="9" width="8" height="7" fill="#2aa7dd"/><rect x="7.500" y="12" width="3" height="4" fill="#cfeefa"/></svg></div>
 <div class="tk act run"><svg width="18" height="18" viewBox="0 0 18 18"><rect width="18" height="18" rx="3" fill="#4ec11f"/><path d="M4 3 14 12l-1.800 2L3 5z" fill="#fff"/></svg></div>
 <div class="tk run"><svg width="18" height="18"><use href="#chrome"/></svg></div>
 <div class="tk run"><svg width="18" height="18"><use href="#chrome"/></svg><svg class="position-absolute tb-ov" width="9" height="9" viewBox="0 0 9 9"><circle cx="4.500" cy="4.500" r="4" fill="#8e63c9"/></svg></div>
 <div class="tk run"><svg width="18" height="18"><use href="#chrome"/></svg><svg class="position-absolute tb-ov" width="9" height="9" viewBox="0 0 9 9"><path d="M4.500 0 8 8H1z" fill="#222" stroke="#ddd" stroke-width=".6"/></svg></div>
 <div class="d-flex align-items-center tray-l">
  <div class="tr"><svg width="15" height="15" viewBox="0 0 15 15"><path d="M2 6l6 8 5-5-3-7z" fill="#9a9a9a"/><path d="M8 1l4 4" stroke="#fff"/></svg></div>
  <div class="tr"><svg width="16" height="16" viewBox="0 0 16 16"><path d="M1 6l7-4 7 4-7 5z" fill="#ddd"/><path d="M2 11l6 4 4-3-6-3z" fill="#aaa"/><path d="M2 12l3 2" stroke="#3cb649"/><path d="M5 14l3 1" stroke="#d9232a"/></svg></div>
  <div class="tr"><svg width="14" height="14" viewBox="0 0 14 14"><circle cx="4" cy="4.500" r="2.500" fill="#c8202a"/><circle cx="10" cy="4" r="2" fill="#c8202a"/><circle cx="7" cy="9.500" r="3" fill="#c8202a"/><circle cx="12" cy="9" r="1.500" fill="#c8202a"/></svg></div>
  <div class="tr"><svg width="12" height="15" viewBox="0 0 12 15"><path d="M0 5h3l5-5v15l-5-5H0z" fill="#e07a3a"/><path d="M10 4c1.500 2 1.500 5 0 7" stroke="#8a3f1d" fill="none"/></svg></div>
  <div class="tr"><svg width="17" height="17" viewBox="0 0 17 17"><path d="M8.500 0 17 16H0z" fill="#19b04b"/><path d="M8.500 7 12 14H5z" fill="#000"/></svg></div>
  <div class="tr"><svg width="16" height="13" viewBox="0 0 16 13"><path d="M1 4.500h2L7 1v11L3 8.500H1z" fill="none" stroke="#fff"/><path d="M9.500 4c1 1.500 1 3.500 0 5M12 2.500c2 2.500 2 5.500 0 8" fill="none" stroke="#fff"/></svg></div>
  <div class="tr"><svg width="15" height="14" viewBox="0 0 15 14"><path d="M1 13C1 7 6 2 14 1M5 13c0-4 3-7 9-8M9 13c0-2 1-4 5-4" fill="none" stroke="#ccc" stroke-width="1.100" stroke-dasharray="2 .6"/></svg></div>
  <div class="tr"><svg width="16" height="12" viewBox="0 0 16 12"><rect x="6.500" y="2.500" width="9" height="8" fill="none" stroke="#fff"/><path d="M2 0v5M5 0v5M1 4.500h5M3.500 8v4" stroke="#fff"/><path d="M8 4h3v5H8z" fill="#fff"/></svg></div>
  <div class="tr"><svg width="13" height="17" viewBox="0 0 13 17"><path d="M.5.500h12V13H8.500L6.500 16 4.500 13H.5z" fill="none" stroke="#fff"/><path d="M3 4h7M3 7h7M3 10h7" stroke="#fff"/></svg></div>
  <svg class="m6" width="23" height="15" viewBox="0 0 23 15"><rect x=".5" y=".5" width="22" height="14" fill="none" stroke="#ddd"/><path d="M3 4h17M3 7h17M6 10.500h11" stroke="#ddd" stroke-dasharray="1.500 1" stroke-width="1.400"/></svg>
  <span class="m10 tray-time">11:48 PM</span>
 </div>
</div>
</body>
</html>
